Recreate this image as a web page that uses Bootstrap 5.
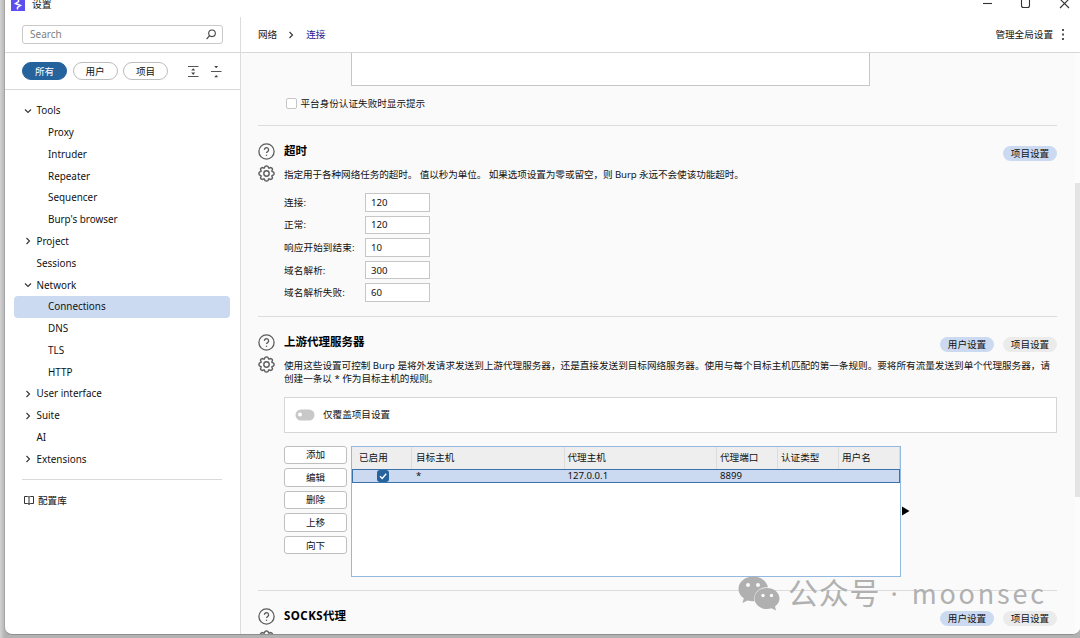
<!DOCTYPE html>
<html lang="zh-CN">
<head>
<meta charset="utf-8">
<meta name="viewport" content="width=device-width, initial-scale=1">
<title>设置</title>
<link href="https://cdn.jsdelivr.net/npm/bootstrap@5.3.0/dist/css/bootstrap.min.css" rel="stylesheet">
<script src="https://cdn.jsdelivr.net/npm/bootstrap@5.3.0/dist/js/bootstrap.bundle.min.js"></script>
<style>
  body { width: 1080px; height: 638px; overflow: hidden; background: #b4b4b4;
    font-family: "Noto Sans", "Noto Sans CJK SC", sans-serif; font-size: 9.6px; line-height: 13px; color: #111; }
  svg { display: block; fill: none; flex: none; }
  .desk { height: 638px; padding-left: 4px; background: linear-gradient(90deg, #d2d2d2 0, #b2b2b2 5px); position: relative; }
  .win { height: 635px; background: #fff; border-left: 1px solid #a5a5a5; border-bottom: 1px solid #8e8e8e; border-radius: 0 0 8px 8px; overflow: hidden; }
  .titlebar { height: 17px; position: relative; padding-left: 6px; }
  .titlebar .name { font-size: 9.8px; line-height: 9px; margin: 0 0 0 7px; }
  .logo { width: 14px; height: 11px; background: #5b4ff0; }
  .winbtns { margin-right: 10px; }
  .side { width: 236px; border-right: 1px solid #dcdcdc; }
  .head { height: 36px; border-bottom: 1px solid #d8d8d8; }
  .find { width: 201px; height: 19px; margin: 8px 0 0 17px; border: 1px solid #c9c9c9; border-radius: 3px; color: #808080; padding: 0 6px 0 7px; font-size: 10px; }
  .filters { height: 37px; border-bottom: 1px solid #d8d8d8; padding-left: 17px; gap: 5.5px; }
  .chip { width: 45px; height: 18px; border: 1px solid #bdbdbd; border-radius: 9px; font-size: 9.6px; }
  .chip.on { background: #25639c; border-color: #25639c; color: #fff; }
  .tree { margin: 10px 10px 0 9px; font-size: 9.9px; }
  .tree .node { height: 21.78px; display: flex; align-items: center; padding-left: 10px; }
  .tree .node svg { margin-right: 4.5px; }
  .tree .leaf { padding-left: 22.5px; }
  .tree .child { padding-left: 34px; }
  .tree .sel { background: #cbdaf1; border-radius: 4px; }
  .rule { height: 1px; background: #d9d9d9; }
  .lib { margin: 13.5px 0 0 19px; gap: 4px; }
  .mainhead { padding: 0 5px 0 17px; }
  .page { background: #fafafa; height: 582px; overflow: hidden; }
  .body-col { width: 833px; padding: 0 17px; flex: none; }
  .track { background: linear-gradient(90deg, #fafafa 0 1px, #fcfcfc 1px); padding: 130px 0 0 1px; }
  .thumb { height: 314px; background: #e4e4e4; }
  .sec { display: flex; border-top: 1px solid #dcdcdc; }
  .gutter { width: 26px; flex: none; padding-top: 17px; }
  .gutter svg + svg { margin-top: 5px; }
  .ttl { font-size: 11.5px; line-height: 16px; font-weight: 700; color: #000; }
  .tag { width: 54px; height: 15px; border-radius: 8px; background: #ebebeb; display: flex; align-items: center; justify-content: center; }
  .tag.on { background: #cbdaf1; }
  .full { text-align: justify; text-align-last: justify; white-space: nowrap; }
  .box { border: 1px solid #c6c6c6; background: #fff; }
  .fields { display: grid; grid-template-columns: 81px 65px; row-gap: 4px; margin-top: 12.500px; }
  .fields > * { height: 18.6px; display: flex; align-items: center; }
  .fields .box { padding-left: 5px; font-size: 9.6px; }
  .fields span:not(.box) { letter-spacing: .12px; }
  .cmd { width: 63px; height: 18.6px; background: #fff; border: 1px solid #bfbfbf; border-radius: 3px; display: flex; align-items: center; justify-content: center; }
  .cmds { gap: 4px; }
  .hosts { width: 549.5px; height: 131px; border: 1px solid #93b9e0; background: #fff; margin-left: 4px; }
  .cols { display: grid; grid-template-columns: 60px 152.5px 152.5px 61px 61px 1fr; }
  .cols > * { display: flex; align-items: center; padding-left: 3px; }
  .cols.hd { height: 22px; background: #eee; }
  .cols.hd > * { border-right: 1px solid #dcdcdc; }
  .cols.rw { height: 14px; background: #cbdaf1; box-shadow: inset 0 0 0 1px #3a73ab; }
  .wmark { position: absolute; left: 738px; top: 576px; color: #b0b0b0; display: flex; white-space: nowrap; font-family: "Noto Sans CJK SC", sans-serif; line-height: 36px; }
</style>
</head>
<body>
<svg width="0" height="0" class="position-absolute">
  <defs>
    <g id="help" stroke="#5c5c5c" stroke-width="1.3"><circle cx="8.5" cy="8.5" r="7.6"/><path d="M6.4 6.9a2.1 2.1 0 1 1 3.2 1.7c-.8.5-1.1.8-1.1 1.5"/><path d="M8.5 11.7v1.2"/></g>
    <g id="gear" stroke="#5c5c5c" stroke-width="1.4" stroke-linejoin="round"><path d="M8.50 0.90 L9.90 1.30 L10.64 3.03 L11.02 3.18 L12.80 2.50 L13.90 3.10 L14.50 4.20 L13.82 5.98 L13.97 6.36 L15.70 7.10 L16.10 8.50 L15.70 9.90 L13.97 10.64 L13.82 11.02 L14.50 12.80 L13.90 13.90 L12.80 14.50 L11.02 13.82 L10.64 13.97 L9.90 15.70 L8.50 16.10 L7.10 15.70 L6.36 13.97 L5.98 13.82 L4.20 14.50 L3.10 13.90 L2.50 12.80 L3.18 11.02 L3.03 10.64 L1.30 9.90 L0.90 8.50 L1.30 7.10 L3.03 6.36 L3.18 5.98 L2.50 4.20 L3.10 3.10 L4.20 2.50 L5.98 3.18 L6.36 3.03 L7.10 1.30Z"/><circle cx="8.5" cy="8.5" r="2.7"/></g>
    <path id="down" d="M1 2.5l3 3 3-3" stroke="#333" stroke-width="1.1"/>
    <path id="right" d="M2.500 1l3 3-3 3" stroke="#333" stroke-width="1.1"/>
  </defs>
</svg>
<div class="desk">
<div class="win">
  <div class="titlebar d-flex align-items-start">
    <div class="logo"><svg width="14" height="11"><path d="M7.500 0V1.500L4.500 3.500 9.500 5.500 6.500 7.500V9.500" stroke="#fff" stroke-width="1.5"/></svg></div>
    <div class="name">设置</div>
    <div class="winbtns ms-auto"><svg width="88" height="12" stroke="#333" stroke-width="1.1"><path d="M1 3.500h9"/><path d="M39.500 0v5.500q0 2 2 2h4q2 0 2-2V0"/><path d="M78-1l9 9M87-1l-9 9"/></svg></div>
  </div>
  <div class="d-flex">
    <aside class="side flex-shrink-0" style="height:618px">
      <div class="head"><div class="d-flex"><div class="find d-flex align-items-center justify-content-between"><span>Search</span><svg width="10" height="11" stroke="#444" stroke-width="1.1"><circle cx="6" cy="4.300" r="3.300"/><path d="M3.700 6.700L.6 10"/></svg></div></div></div>
      <div class="filters d-flex align-items-center">
        <div class="chip on d-flex align-items-center justify-content-center">所有</div>
        <div class="chip d-flex align-items-center justify-content-center">用户</div>
        <div class="chip d-flex align-items-center justify-content-center">项目</div>
        <svg style="margin-left:14px" width="36" height="13"><path d="M0 1.500h10.500M0 11.500h10.500M23 6.500h10.500" stroke="#555" stroke-width="1.1"/><path d="M3.200 5.500l2-2.300 2 2.300zM3.200 7.600l2 2.300 2-2.300zM26.200 1l2 2.300 2-2.300zM26.200 12.200l2-2.300 2 2.300z" fill="#444"/></svg>
      </div>
      <nav class="tree">
        <div class="node"><svg width="8" height="8"><use href="#down"/></svg>Tools</div>
        <div class="node child">Proxy</div>
        <div class="node child">Intruder</div>
        <div class="node child">Repeater</div>
        <div class="node child">Sequencer</div>
        <div class="node child">Burp's browser</div>
        <div class="node"><svg width="8" height="8"><use href="#right"/></svg>Project</div>
        <div class="node leaf">Sessions</div>
        <div class="node"><svg width="8" height="8"><use href="#down"/></svg>Network</div>
        <div class="node child sel">Connections</div>
        <div class="node child">DNS</div>
        <div class="node child">TLS</div>
        <div class="node child">HTTP</div>
        <div class="node"><svg width="8" height="8"><use href="#right"/></svg>User interface</div>
        <div class="node"><svg width="8" height="8"><use href="#right"/></svg>Suite</div>
        <div class="node leaf">AI</div>
        <div class="node"><svg width="8" height="8"><use href="#right"/></svg>Extensions</div>
      </nav>
      <div class="rule" style="margin:9px 18px 0 17px"></div>
      <div class="lib d-flex align-items-center"><svg width="10" height="9" stroke="#333"><path d="M.5 .5h3.200q1.300 0 1.300 1 0-1 1.300-1h3.200v7h-3.200q-1.300 0-1.300 1 0-1-1.300-1H.5zM5 1.500v7"/></svg>配置库</div>
    </aside>
    <main class="flex-grow-1">
      <div class="head mainhead d-flex align-items-center">
        <span>网络</span><svg class="mx-2" width="13" height="8" viewBox="-2 0 13 8"><use href="#right"/></svg><span style="color:#1c1c96">连接</span>
        <span class="ms-auto">管理全局设置</span><svg style="margin:0 10px 0 8px" width="4" height="11"><path d="M1 0h2v2H1zM1 4.500h2v2H1zM1 9h2v2H1z" fill="#555"/></svg>
      </div>
      <div class="page d-flex">
        <div class="body-col">
          <div style="height:72px">
            <div class="box border-top-0" style="width:519px;height:33px;margin-left:93px"></div>
            <div class="d-flex align-items-center" style="margin:11px 0 0 28px"><span class="box" style="width:11px;height:11px;margin-right:3.500px;border-radius:2px"></span>平台身份认证失败时显示提示</div>
          </div>
          <section class="sec" style="height:191px">
            <div class="gutter"><svg width="17" height="17"><use href="#help"/></svg><svg width="17" height="17"><use href="#gear"/></svg></div>
            <div class="flex-grow-1">
              <div class="d-flex justify-content-between" style="padding-top:17px"><div class="ttl">超时</div><div class="tag on" style="margin-top:2.500px">项目设置</div></div>
              <div class="full" style="width:461px;margin-top:7px;letter-spacing:-.075px;width:458px">指定用于各种网络任务的超时。 值以秒为单位。 如果选项设置为零或留空，则 Burp 永远不会使该功能超时。</div>
              <div class="fields">
                <span>连接:</span><span class="box">120</span>
                <span>正常:</span><span class="box">120</span>
                <span>响应开始到结束:</span><span class="box">10</span>
                <span>域名解析:</span><span class="box">300</span>
                <span>域名解析失败:</span><span class="box">60</span>
              </div>
            </div>
          </section>
          <section class="sec" style="height:274px">
            <div class="gutter"><svg width="17" height="17"><use href="#help"/></svg><svg width="17" height="17"><use href="#gear"/></svg></div>
            <div class="flex-grow-1">
              <div class="d-flex" style="padding-top:17px"><div class="ttl me-auto">上游代理服务器</div><div class="tag on" style="margin:2.500px 9px 0 0">用户设置</div><div class="tag" style="margin-top:2.500px">项目设置</div></div>
              <div class="full" style="width:766px;margin-top:7px">使用这些设置可控制 Burp 是将外发请求发送到上游代理服务器，还是直接发送到目标网络服务器。使用与每个目标主机匹配的第一条规则。要将所有流量发送到单个代理服务器，请</div>
              <div>创建一条以 * 作为目标主机的规则。</div>
              <div class="box d-flex align-items-center" style="height:36px;margin-top:12px;padding-left:10px;border-color:#d6d6d6"><svg width="20" height="12" style="margin-right:8px"><rect x=".5" y=".5" width="19" height="11" rx="5.500" fill="#c8c8c8"/><circle cx="5" cy="5.500" r="2" fill="#fff"/></svg>仅覆盖项目设置</div>
              <div class="d-flex" style="margin-top:13px">
                <div class="cmds d-flex flex-column"><div class="cmd">添加</div><div class="cmd">编辑</div><div class="cmd">删除</div><div class="cmd">上移</div><div class="cmd">向下</div></div>
                <div class="hosts">
                  <div class="cols hd"><span style="padding-left:7px">已启用</span><span style="padding-left:4px">目标主机</span><span>代理主机</span><span>代理端口</span><span>认证类型</span><span>用户名</span></div>
                  <div class="cols rw"><span style="padding-left:25px"><svg width="12" height="12"><rect width="12" height="12" rx="3" fill="#25639c"/><path d="M3 6.200l2.200 2.200L9.200 3.800" stroke="#fff" stroke-width="1.400"/></svg></span><span style="padding-left:4px">*</span><span>127.0.0.1</span><span>8899</span><span></span><span></span></div>
                </div>
                <svg width="8" height="10" style="margin:60px 0 0 1px"><path d="M0 .5l7.500 4.500L0 9.500z" fill="#000"/></svg>
              </div>
            </div>
          </section>
          <section class="sec">
            <div class="gutter"><svg width="17" height="17"><use href="#help"/></svg><svg width="17" height="17"><use href="#gear"/></svg></div>
            <div class="flex-grow-1 d-flex" style="padding-top:17px"><div class="ttl me-auto"><span style="letter-spacing:.45px">SOCKS</span>代理</div><div class="tag on" style="margin:2.500px 9px 0 0">用户设置</div><div class="tag" style="margin-top:2.500px">项目设置</div></div>
          </section>
        </div>
        <div class="track flex-grow-1"><div class="thumb"></div></div>
      </div>
    </main>
  </div>
</div>
<div class="wmark">
  <svg width="43" height="36"><path d="M15 .5C7 .5.500 6 .5 13c0 4 2 7 5.300 9.300L4.500 27l5-2.500q3 1 7 .8C14.500 17 22 10.500 30 11.200 28.500 5 22.500.5 15 .5z" fill="#b0b0b0"/><path d="M29 12c-7 0-12.500 4.700-12.500 10.500S22 33 29 33q2.500 0 4.500-.7L38 34.500l-1-4c2.800-2 4.500-4.800 4.500-8C41.500 16.700 36 12 29 12z" fill="#b0b0b0"/><g fill="#fafafa"><circle cx="10" cy="9" r="2"/><circle cx="20" cy="9" r="2"/><circle cx="25" cy="19.500" r="1.700"/><circle cx="33.500" cy="19.500" r="1.700"/></g></svg>
  <span style="font-size:30px;line-height:31px;margin-left:7px;letter-spacing:.8px">公众号</span>
  <span style="font-size:27px;font-family:'Noto Sans',sans-serif;margin-left:10px">·</span>
  <span style="font-size:27px;line-height:34px;margin-left:14px;letter-spacing:2.800px">moonsec</span>
</div>
</div>
</body>
</html>
